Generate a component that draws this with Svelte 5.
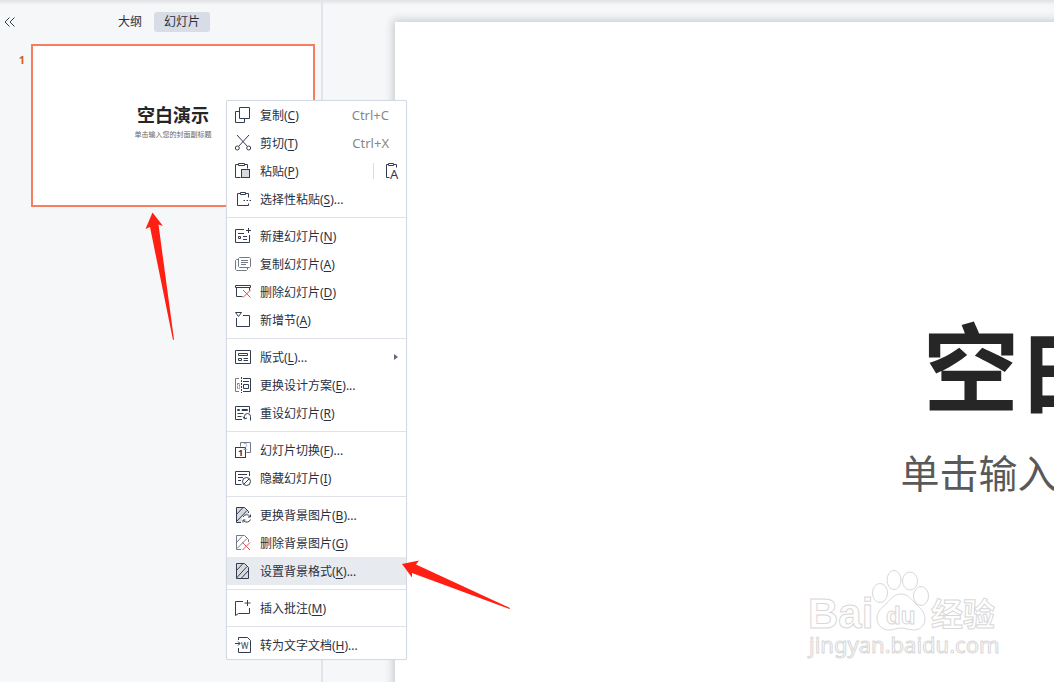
<script>
  let activeTab = $state('slides')
  let selected = $state('background')

  const groups = [
    [
      { id: 'copy', label: '复制', key: 'C', hint: 'Ctrl+C' },
      { id: 'cut', label: '剪切', key: 'T', hint: 'Ctrl+X' },
      { id: 'paste', label: '粘贴', key: 'P', extra: true },
      { id: 'paste-special', label: '选择性粘贴', key: 'S', more: true }
    ],
    [
      { id: 'new-slide', label: '新建幻灯片', key: 'N' },
      { id: 'copy-slide', label: '复制幻灯片', key: 'A' },
      { id: 'delete-slide', label: '删除幻灯片', key: 'D' },
      { id: 'new-section', label: '新增节', key: 'A' }
    ],
    [
      { id: 'layout', label: '版式', key: 'L', more: true, submenu: true },
      { id: 'scheme', label: '更换设计方案', key: 'E', more: true },
      { id: 'reset', label: '重设幻灯片', key: 'R' }
    ],
    [
      { id: 'transition', label: '幻灯片切换', key: 'F', more: true },
      { id: 'hide', label: '隐藏幻灯片', key: 'I' }
    ],
    [
      { id: 'change-picture', label: '更换背景图片', key: 'B', more: true },
      { id: 'delete-picture', label: '删除背景图片', key: 'G' },
      { id: 'background', label: '设置背景格式', key: 'K', more: true }
    ],
    [{ id: 'comment', label: '插入批注', key: 'M' }],
    [{ id: 'to-document', label: '转为文字文档', key: 'H', more: true }]
  ]
</script>

{#snippet icon(id)}
  <svg class="icon" width="18" height="18" viewBox="0 0 18 18" aria-hidden="true">
    {#if id === 'copy'}
      <path d="M5.5 1.5h10v11h-10zM5.5 5.5h-4v11h9v-4" />
    {:else if id === 'cut'}
      <path d="M3 1l10.3 11.3M15 1L4.7 12.3" />
      <circle cx="3.3" cy="14" r="2" />
      <circle cx="14.7" cy="14" r="2" />
    {:else if id === 'paste'}
      <path d="M4.5 2.5h-3v13h5M10.5 2.5h3v4M4.5 1.5h6v2h-6z" />
      <rect class="shade" x="7.5" y="7.5" width="8" height="8" />
    {:else if id === 'paste-special'}
      <path d="M6.5 3.5h-3v12h11v-2M11.5 3.5h3v4M6.5 2.5h5v2h-5z" />
      <path d="M9.5 10.5h1.5M12.5 10.5h1.5M15.5 10.5h1.5" />
    {:else if id === 'new-slide'}
      <path d="M10 2.5H1.5v13h14V8M4 6.5h6M4.5 9.5h2v2h-2zM9 9.5h4M9 12.5h4M14.5 1v5M12 3.5h5" />
    {:else if id === 'copy-slide'}
      <g class="soft">
        <path d="M5.5 2.5h10l1 1v8l-1 1h-10l-1-1v-8zM4.5 4.5h-2l-1 1v9l1 1h10l1-1v-2M7 5.500h7M7 7.500h7M7 9.500h5" />
      </g>
    {:else if id === 'delete-slide'}
      <path d="M1.5 2.5h15v2h-15zM2.5 4.5v9h6M15.5 4.5v3" />
      <path class="red" d="M9 7l7.500 7.500M16.500 7L9 14.500" />
    {:else if id === 'new-section'}
      <path d="M1.5 1.5h6l-3 4zM2.500 7v8.500h13v-11H9" />
    {:else if id === 'layout'}
      <path d="M1.5 2.5h15v13h-15zM4.5 5.5h9v2h-9zM4.5 10.500h3v2h-3zM9.5 10.500h4.5M9.500 12.500h4.500" />
    {:else if id === 'scheme'}
      <g class="soft">
        <path d="M5 2.5H1.5v13H5" />
        <path d="M3.5 7.5h2v5h-2z" stroke-dasharray="2 1" />
      </g>
      <path d="M7.5 1v16" stroke-dasharray="2 1" />
      <path d="M9 2.5h7.5v13H9M9.5 8.5h5v4h-5zM9 5.5h6" />
    {:else if id === 'reset'}
      <path d="M8 15.5H1.5v-13h14v6M3.5 5.5h2v1h-2zM8 5.5h5.5v1H8zM3.5 9.5h6M3.5 12.5h4" />
      <path d="M9 12.5l1.5 2.5 2.5-1M10.5 14.5v-2a3 3 0 0 1 6 0v4" />
    {:else if id === 'transition'}
      <g class="soft"><path d="M6.5 5.5v-4h10v10h-4" /></g>
      <rect class="pale" x="1.5" y="6.5" width="10" height="10" />
      <text class="dim" x="9" y="9">2</text>
      <text class="digit" x="4" y="15">1</text>
    {:else if id === 'hide'}
      <path d="M7.5 15.5h-6v-13h14V7M4 5.5h9M4 8.5h5M4 11.5h3" />
      <circle class="pale" cx="12.5" cy="12.5" r="4" />
      <path d="M10 15l5-5" />
    {:else if id === 'change-picture'}
      <path class="shade" d="M7 16.5H2.5v-15h8l4 4V7l-6 3z" stroke="none" />
      <path d="M7 16.5H2.5v-15h8l4 4v1.5M2.5 8.5l6.5-7M2.5 15.5L13 4.5" />
      <path d="M9 11a4 4 0 0 1 7-.5M16.5 8.5v2.5H14M16.5 13.5a4 4 0 0 1-7 1M9 16.5v-2.5h2.5" />
    {:else if id === 'delete-picture'}
      <g class="soft">
        <path d="M7 15.5H2.5v-14h8l4 4V8M3 8l5-5.5M3 14.5L13 4.5" />
      </g>
      <path class="red" d="M8.5 8.5l7.5 7.5M16 8.5L8.5 16" />
    {:else if id === 'background'}
      <path class="shade" d="M2.5 1.5h8l4 4v11h-12z" />
      <path d="M2.5 8.5l6.5-7M2.5 16L13 4.5M7 16.5l7.5-8" />
    {:else if id === 'comment'}
      <path d="M9 2.5H1.5v14l3-2h11V9M13.5 1v6M10.5 4h6" />
    {:else if id === 'to-document'}
      <path d="M4.5 4V1.5h9l3 3v12h-12V12M1 7.5h5M4 5.5l2 2-2 2" />
      <text x="7" y="13">W</text>
    {/if}
  </svg>
{/snippet}

<div class="app">
  <aside class="sidebar">
    <header>
      <button class="collapse" aria-label="收起">
        <svg width="12" height="10" viewBox="0 0 12 10" aria-hidden="true">
          <path d="M5.5 .5L1 5l4.5 4.5M10.5 .5L6 5l4.5 4.5" />
        </svg>
      </button>
      <div class="tabs">
        <button class:active={activeTab === 'outline'} onclick={() => (activeTab = 'outline')}>大纲</button>
        <button class:active={activeTab === 'slides'} onclick={() => (activeTab = 'slides')}>幻灯片</button>
      </div>
    </header>
    <div class="slide-row">
      <span class="number">1</span>
      <div class="thumb">
        <strong>空白演示</strong>
        <span>单击输入您的封面副标题</span>
      </div>
    </div>
  </aside>

  <main class="stage">
    <section class="slide">
      <h1>空白演示</h1>
      <p>单击输入您的封面副标题</p>
    </section>
    <svg class="watermark" width="210" height="110" viewBox="0 0 210 110">
      <text class="latin" x="8" y="68" font-size="42">Bai</text>
      <ellipse cx="80" cy="33" rx="7.5" ry="9.5" />
      <ellipse cx="94" cy="20" rx="7" ry="9.5" />
      <ellipse cx="110" cy="21" rx="7.5" ry="9" />
      <ellipse cx="121" cy="36" rx="7.5" ry="9.5" />
      <path d="M101 34c-7 0-10 5-14 9s-10 8-10 15 5 12 12 12c5 0 8-2 12-2s8 2 13 2c6 0 11-5 11-11 0-7-5-11-9-15-5-5-8-10-15-10z" />
      <text class="latin" x="86" y="64" font-size="24">du</text>
      <text class="cjk" x="131" y="66" font-size="32">经验</text>
      <text class="url" x="9" y="93" font-size="22">jingyan.baidu.com</text>
    </svg>
  </main>

  <div class="menu" role="menu">
    {#each groups as group}
      <div class="group" role="group">
        {#each group as item}
          <div class="row" class:selected={selected === item.id}>
            <button class="item" role="menuitem" onclick={() => (selected = item.id)}>
              {@render icon(item.id)}
              <span>{item.label}(<u>{item.key}</u>){item.more ? '...' : ''}</span>
              {#if item.hint}<kbd>{item.hint}</kbd>{/if}
              {#if item.submenu}
                <svg class="caret" width="4" height="6" viewBox="0 0 4 6" aria-hidden="true"><path d="M0 0l4 3-4 3z" /></svg>
              {/if}
            </button>
            {#if item.extra}
              <button class="text-only" aria-label="只粘贴文本">
                <svg class="icon" width="18" height="18" viewBox="0 0 18 18" aria-hidden="true">
                  <path d="M4.5 2.5h-2v13h3M9.5 2.5h3v3M4.5 1.5h5v2h-5z" />
                  <text class="letter" x="6" y="17">A</text>
                </svg>
              </button>
            {/if}
          </div>
        {/each}
      </div>
    {/each}
  </div>

  <svg class="arrow up" width="30" height="130" viewBox="0 0 30 130" aria-hidden="true">
    <path d="M8.5 .5L19 14l-4.5-1.500L30 127.500l-1 .5L6 15l-4.500 2z" />
  </svg>
  <svg class="arrow left" width="110" height="50" viewBox="0 0 110 50" aria-hidden="true">
    <path d="M1 4L18 .5l-3 4L109 48l-.5 1L11 13v4.500z" />
  </svg>
</div>

<style>
  :global(body) {
    margin: 0;
    overflow: hidden;
  }

  .app {
    position: relative;
    display: grid;
    grid-template-columns: 323px 1fr;
    height: 100vh;
    overflow: hidden;
    background: linear-gradient(#e0e1e3, #f5f7f9 5px);
    color: #293042;
    font-family: "Noto Sans", "Noto Sans CJK SC", sans-serif;
    font-size: 12px;
  }

  button {
    padding: 0;
    border: 0;
    background: none;
    color: inherit;
    font: inherit;
    cursor: pointer;
  }

  .sidebar {
    border-right: 2px solid #e1e4eb;
  }

  header {
    display: flex;
    align-items: center;
    height: 44px;
  }

  .collapse {
    display: flex;
    width: 108px;
    padding-left: 4px;
  }

  .collapse path {
    fill: none;
    stroke: #353e52;
  }

  .tabs {
    display: flex;
    gap: 2px;
  }

  .tabs button {
    padding: 0 10px;
    border-radius: 3px;
    line-height: 20px;
  }

  .tabs button.active {
    background: #d8dde5;
  }

  .slide-row {
    display: flex;
    padding-right: 6px;
  }

  .number {
    width: 25px;
    padding: 8px 6px 0 0;
    text-align: right;
    color: #d46218;
    font-size: 11px;
    font-weight: 700;
  }

  .thumb {
    display: flex;
    flex: 1;
    flex-direction: column;
    align-items: center;
    justify-content: center;
    height: 151px;
    padding-bottom: 8px;
    border: 2px solid #f87c5e;
    background: #fff;
    color: #262626;
  }

  .thumb strong {
    font-size: 18px;
    line-height: 26px;
  }

  .thumb span {
    color: #666;
    font-size: 7px;
    line-height: 14px;
  }

  .stage {
    position: relative;
    padding: 22px 0 0 72px;
    overflow: hidden;
  }

  .slide {
    display: flex;
    flex-direction: column;
    align-items: center;
    width: 1440px;
    height: 820px;
    background: #fff;
    box-shadow: 0 0 8px 2px #c8cacd;
    white-space: nowrap;
  }

  .slide h1 {
    margin: 275px 0 8px;
    color: #262626;
    font-size: 96px;
    font-weight: 700;
    line-height: 140px;
  }

  .slide p {
    margin: 0;
    color: #595959;
    font-size: 39px;
    line-height: 56px;
  }

  .watermark {
    position: absolute;
    right: 44px;
    bottom: 12px;
    fill: #fff;
    stroke: #d8d8d8;
  }

  .latin {
    font-family: "Liberation Sans", sans-serif;
    font-weight: 700;
  }

  .cjk {
    font-weight: 700;
  }

  .menu {
    position: absolute;
    top: 100px;
    left: 226px;
    box-sizing: border-box;
    width: 181px;
    border: 1px solid #d3dae6;
    border-radius: 2px;
    background: #fff;
    box-shadow: 0 0 1px #d3dae6;
  }

  .group + .group {
    margin-top: 4px;
    padding-top: 4px;
    border-top: 1px solid #dfe2e9;
  }

  .row {
    display: flex;
    height: 28px;
  }

  .row.selected {
    background: #e7eaef;
  }

  .item {
    display: flex;
    flex: 1;
    align-items: center;
    padding: 0 8px 0 7px;
    text-align: left;
    white-space: nowrap;
  }

  .item span {
    flex: 1;
    margin-left: 8px;
  }

  u {
    text-underline-offset: 2px;
  }

  kbd {
    margin-right: 9px;
    color: #878787;
    font: inherit;
    font-size: 13px;
  }

  .text-only {
    display: flex;
    align-items: center;
    width: 33px;
    padding-left: 11px;
    background: linear-gradient(#d9dce2, #d9dce2) left center / 1px 16px no-repeat;
  }

  .icon {
    flex: none;
    fill: none;
    stroke: #343c4f;
  }

  .icon .soft {
    stroke: #737b89;
  }

  .icon .red {
    stroke: #e0524f;
  }

  .icon .shade {
    fill: #d7dade;
  }

  .icon .pale {
    fill: #fff;
  }

  .icon text {
    fill: #343c4f;
    stroke: none;
    font-size: 8px;
  }

  .icon .digit {
    font-size: 9px;
    font-weight: 700;
  }

  .icon .dim {
    fill: #9ba1ab;
  }

  .icon .letter {
    font-size: 13px;
  }

  .caret {
    fill: #5f6a7d;
  }

  .arrow {
    position: absolute;
    fill: #ff2013;
    pointer-events: none;
  }

  .arrow.up {
    top: 212px;
    left: 144px;
  }

  .arrow.left {
    top: 560px;
    left: 401px;
  }
</style>
